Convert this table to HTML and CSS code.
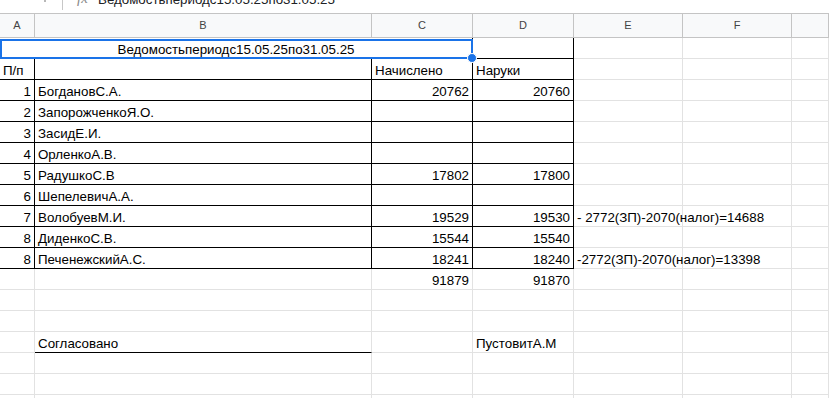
FILE: index.html
```html
<!DOCTYPE html>
<html lang="ru">
<head>
<meta charset="utf-8">
<title>Ведомость</title>
<link rel="stylesheet" href="styles.css">
</head>
<body>
<div class="formula-bar">
  <div class="namebox"><span class="caret"></span></div>
  <div class="sep"></div>
  <div class="fx">fx</div>
  <div class="formula-text">Ведомостьпериодс15.05.25по31.05.25</div>
</div>
<div class="sheet">
  <div class="ch">A</div><div class="ch">B</div><div class="ch">C</div><div class="ch">D</div><div class="ch">E</div><div class="ch">F</div><div class="ch"></div>

  <div class="c span3 center bb br sel">Ведомостьпериодс15.05.25по31.05.25<span class="handle"></span></div><div class="c br bb"></div><div class="c"></div><div class="c"></div><div class="c"></div>

  <div class="c br bb">П/п</div><div class="c br bb"></div><div class="c br bb">Начислено</div><div class="c br bb">Наруки</div><div class="c"></div><div class="c"></div><div class="c"></div>

  <div class="c br bb num">1</div><div class="c br bb">БогдановС.А.</div><div class="c br bb num">20762</div><div class="c br bb num">20760</div><div class="c"></div><div class="c"></div><div class="c"></div>
  <div class="c br bb num">2</div><div class="c br bb">ЗапорожченкоЯ.О.</div><div class="c br bb"></div><div class="c br bb"></div><div class="c"></div><div class="c"></div><div class="c"></div>
  <div class="c br bb num">3</div><div class="c br bb">ЗасидЕ.И.</div><div class="c br bb"></div><div class="c br bb"></div><div class="c"></div><div class="c"></div><div class="c"></div>
  <div class="c br bb num">4</div><div class="c br bb">ОрленкоА.В.</div><div class="c br bb"></div><div class="c br bb"></div><div class="c"></div><div class="c"></div><div class="c"></div>
  <div class="c br bb num">5</div><div class="c br bb">РадушкоС.В</div><div class="c br bb num">17802</div><div class="c br bb num">17800</div><div class="c"></div><div class="c"></div><div class="c"></div>
  <div class="c br bb num">6</div><div class="c br bb">ШепелевичА.А.</div><div class="c br bb"></div><div class="c br bb"></div><div class="c"></div><div class="c"></div><div class="c"></div>
  <div class="c br bb num">7</div><div class="c br bb">ВолобуевМ.И.</div><div class="c br bb num">19529</div><div class="c br bb num">19530</div><div class="c over">- 2772(ЗП)-2070(налог)=14688</div><div class="c"></div><div class="c"></div>
  <div class="c br bb num">8</div><div class="c br bb">ДиденкоС.В.</div><div class="c br bb num">15544</div><div class="c br bb num">15540</div><div class="c"></div><div class="c"></div><div class="c"></div>
  <div class="c br bb num">8</div><div class="c br bb">ПеченежскийА.С.</div><div class="c br bb num">18241</div><div class="c br bb num">18240</div><div class="c over">-2772(ЗП)-2070(налог)=13398</div><div class="c"></div><div class="c"></div>

  <div class="c"></div><div class="c"></div><div class="c num">91879</div><div class="c num">91870</div><div class="c"></div><div class="c"></div><div class="c"></div>
  <div class="c"></div><div class="c"></div><div class="c"></div><div class="c"></div><div class="c"></div><div class="c"></div><div class="c"></div>
  <div class="c"></div><div class="c"></div><div class="c"></div><div class="c"></div><div class="c"></div><div class="c"></div><div class="c"></div>
  <div class="c"></div><div class="c bb">Согласовано</div><div class="c"></div><div class="c">ПустовитА.М</div><div class="c"></div><div class="c"></div><div class="c"></div>
  <div class="c"></div><div class="c"></div><div class="c"></div><div class="c"></div><div class="c"></div><div class="c"></div><div class="c"></div>
  <div class="c"></div><div class="c"></div><div class="c"></div><div class="c"></div><div class="c"></div><div class="c"></div><div class="c"></div>
  <div class="c"></div><div class="c"></div><div class="c"></div><div class="c"></div><div class="c"></div><div class="c"></div><div class="c"></div>
</div>
</body>
</html>
```
FILE: styles.css
```css
html, body {
  margin: 0;
  padding: 0;
  background: #fff;
  overflow: hidden;
}
body {
  width: 829px;
  height: 398px;
  font-family: "Liberation Sans", Arial, sans-serif;
  font-size: 13.33px;
  color: #000;
}
.formula-bar {
  height: 13px;
  border-bottom: 1px solid #c4c4c4;
  display: flex;
  overflow: hidden;
  position: relative;
}
.namebox {
  width: 62px;
  position: relative;
}
.caret {
  position: absolute;
  left: 44px;
  top: 0;
  width: 2px;
  height: 2px;
  background: #b8b8b8;
}
.sep {
  width: 1px;
  height: 10px;
  background: #c7c7c7;
}
.fx {
  margin-left: 14px;
  width: 21px;
  font-family: "Liberation Serif", serif;
  font-style: italic;
  font-size: 15px;
  line-height: 16px;
  margin-top: -10px;
  color: #8a8a8a;
}
.formula-text {
  font-size: 13.33px;
  line-height: 16px;
  margin-top: -8px;
  color: #202124;
  white-space: nowrap;
}
.sheet {
  display: grid;
  width: 829px;
  grid-template-columns: 35px 337px 101px 101px 109px 109px 37px;
  grid-template-rows: 24px;
  grid-auto-rows: 21px;
}
.ch {
  box-sizing: border-box;
  background: #f8f9fa;
  border-right: 1px solid #c4c4c4;
  border-bottom: 1px solid #c4c4c4;
  font-size: 11px;
  color: #444;
  text-align: center;
  line-height: 23px;
}
.c {
  box-sizing: border-box;
  border-right: 1px solid #e2e2e2;
  border-bottom: 1px solid #e2e2e2;
  padding: 4px 3px 0 3px;
  line-height: 16px;
  white-space: nowrap;
  position: relative;
}
.c.br { border-right-color: #000; }
.c.bb { border-bottom-color: #000; }
.num { text-align: right; }
.center { text-align: center; }
.span3 { grid-column: span 3; }
.over { overflow: visible; z-index: 1; }
.sel::before {
  content: "";
  position: absolute;
  left: 0;
  top: 1px;
  right: -1px;
  bottom: -1px;
  border: 2px solid #1a73e8;
  pointer-events: none;
}
.handle {
  position: absolute;
  right: -5px;
  bottom: -5px;
  width: 8px;
  height: 8px;
  border-radius: 50%;
  background: #1a73e8;
  border: 1px solid #fff;
  z-index: 2;
}
```
